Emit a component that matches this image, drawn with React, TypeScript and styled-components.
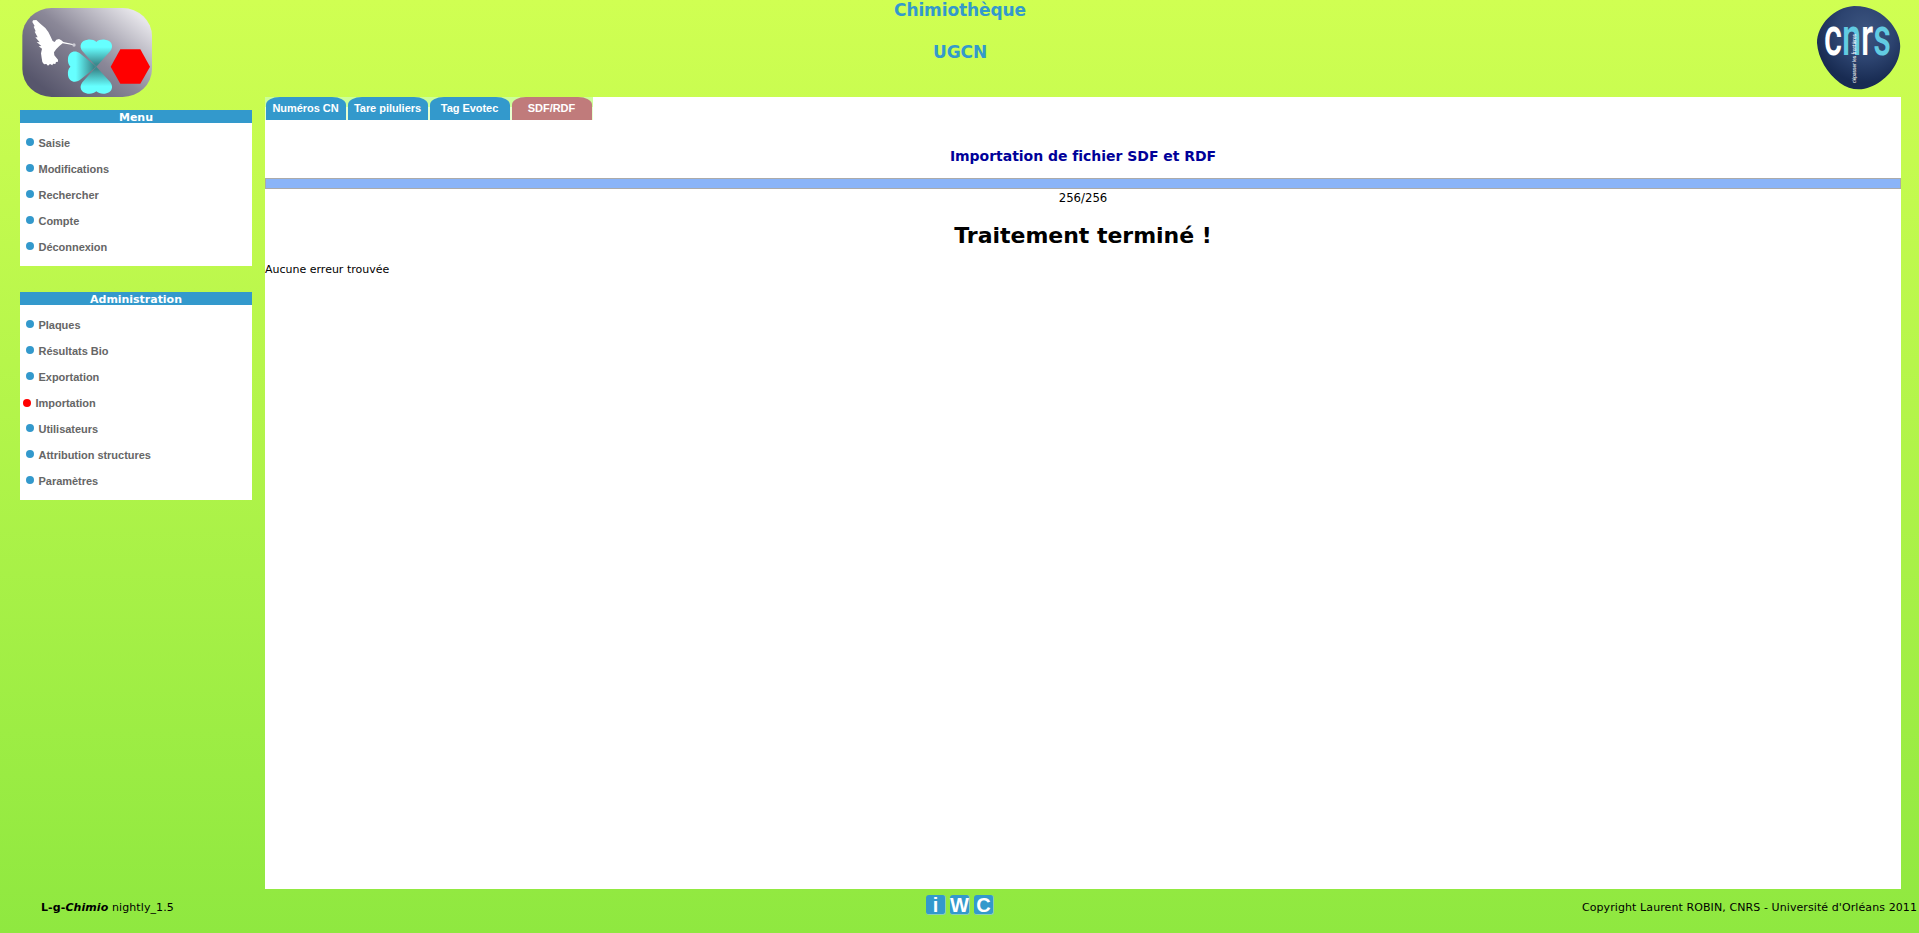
import React from "react";
import styled, { createGlobalStyle } from "styled-components";

const Global = createGlobalStyle`
  * { box-sizing: border-box; }
  body { margin: 0; }
`;

const Page = styled.div`
  width: 100%;
  height: 933px;
  display: grid;
  grid-template-rows: 97px 792px 44px;
  overflow: hidden;
  background: linear-gradient(#d0ff52, #8fe840);
  color: #000;
  font: 11px "DejaVu Sans", Verdana, sans-serif;
`;

const Header = styled.header`
  display: grid;
  grid-template-columns: 1fr auto 1fr;
  align-items: start;
`;

const AppLogo = styled.svg`
  display: block;
  width: 130px;
  height: 89px;
  margin: 8px 0 0 22px;
`;

const CnrsLogo = styled.svg`
  display: block;
  justify-self: end;
  width: 84px;
  height: 84px;
  margin: 6px 18px 0 0;
`;

const SiteTitle = styled.div`
  display: flex;
  flex-direction: column;
  gap: 22px;
  padding-left: 1px;
  text-align: center;
  color: #39c;
  font-size: 17px;
  font-weight: bold;
  line-height: 20px;
  letter-spacing: -0.1px;
`;

const Body = styled.div`
  display: flex;
  padding-right: 18px;
`;

const Sidebar = styled.nav`
  flex: 0 0 265px;
  display: flex;
  flex-direction: column;
  gap: 26px;
  padding: 13px 13px 0 20px;
`;

const MenuBox = styled.section`
  background: #fff;
  padding-bottom: 6px;
`;

const MenuTitle = styled.h2`
  margin: 0 0 7px;
  height: 13px;
  background: #39c;
  color: #fff;
  font-size: 11px;
  line-height: 15px;
  letter-spacing: -0.03px;
  text-align: center;
`;

const MenuItem = styled.a<{ $active?: boolean }>`
  display: flex;
  align-items: center;
  gap: 4.5px;
  height: 26px;
  padding-left: ${(p) => (p.$active ? 3 : 6)}px;
  color: #666;
  font: bold 11px/26px "Liberation Sans", Arial, sans-serif;
  letter-spacing: -0.03px;

  &::before {
    content: "";
    width: 8px;
    height: 8px;
    margin-bottom: ${(p) => (p.$active ? 0 : 2)}px;
    border-radius: 50%;
    background: ${(p) => (p.$active ? "#f00" : "#39c")};
  }
`;

const Content = styled.main`
  flex: 1;
  background: #fff;
`;

const Tabs = styled.div`
  display: flex;
  gap: 2px;
  width: 328px;
  height: 23px;
  padding-left: 1px;
  background: linear-gradient(#cf9 10px, #e8ffd0 10px);
`;

const Tab = styled.a<{ $active?: boolean }>`
  width: 80px;
  flex: none;
  padding-right: 1px;
  border-radius: 14px 14px 0 0 / 8px 8px 0 0;
  background: ${(p) => (p.$active ? "#c07b7b" : "#39c")};
  color: #fff;
  font: bold 11px/23px "Liberation Sans", Arial, sans-serif;
  letter-spacing: -0.04px;
  text-align: center;
`;

const PageTitle = styled.h1`
  margin: 26px 0 12px;
  color: #009;
  font-size: 14px;
  line-height: 20px;
  letter-spacing: -0.03px;
  text-align: center;
`;

const Progress = styled.div`
  height: 11px;
  border: 1px solid #aaa;
  background: #8ab4f8;
`;

const Count = styled.div`
  font: 13px/17px "DejaVu Sans Condensed", "DejaVu Sans", sans-serif;
  text-align: center;
`;

const Done = styled.h2`
  margin: 15px 0 12px;
  font-size: 22px;
  line-height: 30px;
  letter-spacing: -0.03px;
  text-align: center;
`;

const Message = styled.p`
  margin: 0;
  line-height: 14px;
`;

const Footer = styled.footer`
  display: grid;
  grid-template-columns: 1fr auto 1fr;
  align-items: start;
  line-height: 14px;
  letter-spacing: 0.09px;
`;

const Version = styled.div`
  padding: 12px 0 0 41px;
`;

const Copyright = styled.div`
  padding: 12px 2px 0 0;
  text-align: right;
  white-space: nowrap;
`;

const Badges = styled.div`
  display: flex;
  gap: 4px;
  padding: 6px 0 0 1px;
`;

const Badge = styled.a`
  width: 20px;
  height: 20px;
  border: solid #8cd0b4;
  border-width: 0 1px 1px 0;
  border-radius: 3px;
  background: #39c;
  color: #fff;
  font: bold 20px/20px "Liberation Sans", Arial, sans-serif;
  letter-spacing: 0;
  display: flex;
  justify-content: center;
`;

const menu = ["Saisie", "Modifications", "Rechercher", "Compte", "Déconnexion"];
const admin = [
  "Plaques",
  "Résultats Bio",
  "Exportation",
  "Importation",
  "Utilisateurs",
  "Attribution structures",
  "Paramètres",
];
const tabs = ["Numéros CN", "Tare piluliers", "Tag Evotec", "SDF/RDF"];

function Menu({ title, items, active }: { title: string; items: string[]; active?: string }) {
  return (
    <MenuBox>
      <MenuTitle>{title}</MenuTitle>
      {items.map((item) => (
        <MenuItem key={item} $active={item === active}>
          {item}
        </MenuItem>
      ))}
    </MenuBox>
  );
}

const leaf =
  "M289 200 L247 153 C236 138 243 121 263 119 C274 118 283 120 289 126 C295 120 304 118 315 119 C335 121 342 138 331 153 Z";

function HummingbirdLogo() {
  return (
    <AppLogo viewBox="66 24 390 267" preserveAspectRatio="none">
      <defs>
        <linearGradient id="plate" x1="0.12" y1="0.85" x2="0.95" y2="0.15">
          <stop offset="0" stopColor="#57566c" />
          <stop offset="0.5" stopColor="#8b8898" />
          <stop offset="1" stopColor="#e6e5ea" />
        </linearGradient>
        <linearGradient id="leaf" x1="0" y1="0" x2="0" y2="1">
          <stop offset="0.28" stopColor="#66ffff" />
          <stop offset="0.9" stopColor="#3a8a8e" />
        </linearGradient>
      </defs>
      <rect x="67" y="24" width="389" height="267" rx="88" ry="84" fill="url(#plate)" />
      <path d={leaf} fill="url(#leaf)" />
      <path d={leaf} fill="url(#leaf)" transform="rotate(180 289 200)" />
      <path d={leaf} fill="url(#leaf)" transform="translate(289 200) scale(1.05 0.96) rotate(-90) translate(-289 -200)" />
      <path d="M332 200 L361 148 L421 148 L450 200 L421 251 L361 251 Z" fill="#f00" />
      <path
        d="M99 61 L109 60 L121 71 L136 84 L145 96 L151 108 L158 123 L164 126 L169 119 L177 117 L184 121 L190 126 L218 132 L218 135 L188 130 L178 138 L169 147 L162 157 L163 166 L174 179 L174 185 L168 186 L166 192 L159 191 L157 196 L150 192 L144 197 L139 192 L132 193 L127 186 L125 174 L123 160 L126 146 L116 139 L124 138 L110 126 L119 127 L106 112 L113 112 L104 95 L107 94 L101 80 L104 78 L97 66 Z"
        fill="#fff"
      />
      <circle cx="222" cy="135" r="5" fill="#e8e8ee" opacity="0.7" />
    </AppLogo>
  );
}

function Cnrs() {
  return (
    <CnrsLogo viewBox="0 0 84 84">
      <defs>
        <radialGradient id="globe" cx="0.58" cy="0.3" r="0.62">
          <stop offset="0" stopColor="#3c5580" />
          <stop offset="0.55" stopColor="#2d4470" />
          <stop offset="1" stopColor="#182b52" />
        </radialGradient>
      </defs>
      <path
        d="M37 0 C54 0 66 7 74 17 C81 26 84 35 83 43 C82 61 67 76 53 81 C44 85 32 84 23 77 C10 67 1 52 0 37 C0 19 17 1 37 0 Z"
        fill="url(#globe)"
      />
      <text
        x="7"
        y="49"
        fill="#fff"
        fontFamily="Roboto, sans-serif"
        fontSize="51"
        fontWeight="500"
        textLength="67"
        lengthAdjust="spacingAndGlyphs"
      >
        c<tspan fill="#62cbe2">n</tspan>r<tspan fill="#62cbe2">s</tspan>
      </text>
      <text
        transform="translate(38.5 77) rotate(-90)"
        fill="#fff"
        fontFamily="Roboto, sans-serif"
        fontSize="5.5"
        textLength="49"
        lengthAdjust="spacingAndGlyphs"
      >
        dépasser les frontières
      </text>
    </CnrsLogo>
  );
}

export default function App() {
  return (
    <Page>
      <Global />
      <Header>
        <HummingbirdLogo />
        <SiteTitle>
          <span>Chimiothèque</span>
          <span>UGCN</span>
        </SiteTitle>
        <Cnrs />
      </Header>
      <Body>
        <Sidebar>
          <Menu title="Menu" items={menu} />
          <Menu title="Administration" items={admin} active="Importation" />
        </Sidebar>
        <Content>
          <Tabs>
            {tabs.map((t) => (
              <Tab key={t} $active={t === "SDF/RDF"}>
                {t}
              </Tab>
            ))}
          </Tabs>
          <PageTitle>Importation de fichier SDF et RDF</PageTitle>
          <Progress />
          <Count>256/256</Count>
          <Done>Traitement terminé !</Done>
          <Message>Aucune erreur trouvée</Message>
        </Content>
      </Body>
      <Footer>
        <Version>
          <b>
            L-g-<i>Chimio</i>
          </b>{" "}
          nightly_1.5
        </Version>
        <Badges>
          <Badge>i</Badge>
          <Badge>W</Badge>
          <Badge>C</Badge>
        </Badges>
        <Copyright>Copyright Laurent ROBIN, CNRS - Université d'Orléans 2011</Copyright>
      </Footer>
    </Page>
  );
}
